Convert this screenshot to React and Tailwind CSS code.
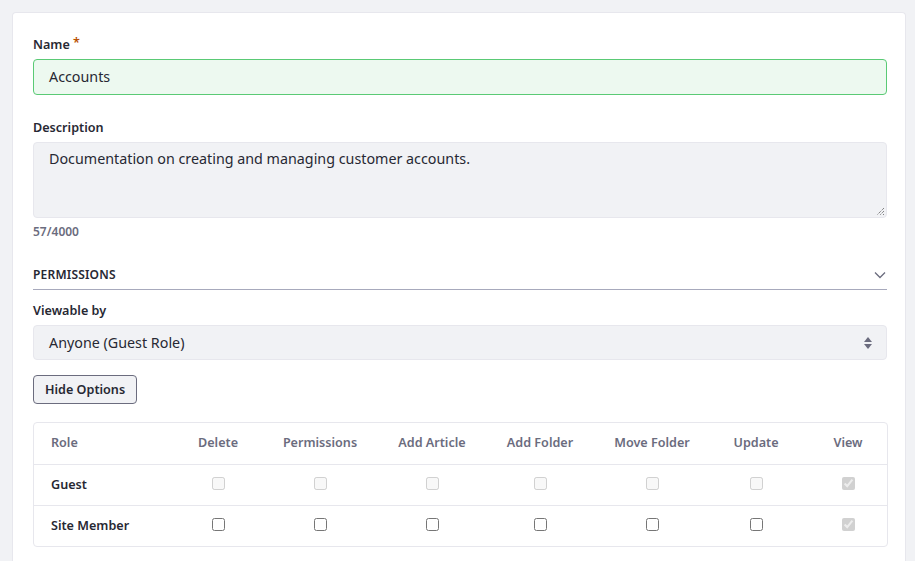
import React from 'react'

const COLS = [
  { label: 'Delete', w: 'w-[74px]' },
  { label: 'Permissions', w: 'w-[130px]' },
  { label: 'Add Article', w: 'w-[94px]' },
  { label: 'Add Folder', w: 'w-[122px]' },
  { label: 'Move Folder', w: 'w-[102px]' },
  { label: 'Update', w: 'w-[106px]' },
  { label: 'View', w: 'w-[78px]' },
]

const ROWS = [
  { role: 'Guest', disabled: true },
  { role: 'Site Member', disabled: false },
]

function Check({ disabled, checked }) {
  return (
    <input
      type="checkbox"
      className="relative -top-[3px] m-0 h-[13px] w-[13px] align-middle"
      disabled={disabled}
      defaultChecked={checked}
    />
  )
}

export default function App() {
  return (
    <div className="min-h-[561px] bg-[#f1f2f5] px-3 pt-3 font-['Noto_Sans',sans-serif] text-[#272833]">
      <div className="w-[894px] rounded-t-[4px] border border-b-0 border-[#e7e7ed] bg-white pl-5 pr-[18px] pt-[23px] pb-6">
        {/* Name */}
        <label className="block text-[12.6px] font-semibold leading-[18px]">
          Name <span className="relative -top-[2px] text-[#b95000]">*</span>
        </label>
        <div className="mt-[5px] flex h-9 items-center rounded-[4px] border border-[#5aca75] bg-[#edf9f0] px-[15px] pb-[1px] text-[14.3px]">
          Accounts
        </div>

        {/* Description */}
        <label className="mt-[24px] block text-[12.6px] font-semibold leading-[18px]">Description</label>
        <div className="relative mt-[5px] h-[76px] rounded-[4px] border border-[#e7e7ed] bg-[#f1f2f5] px-[15px] pt-[5px] text-[14.3px] leading-[22px]">
          Documentation on creating and managing customer accounts.
          <svg className="absolute right-[1px] bottom-[1px]" width="9" height="9" viewBox="0 0 9 9">
            <path d="M8 1L1 8M8 4L4 8M8 7L7 8" stroke="#555" strokeWidth="1" strokeDasharray="1 1" />
          </svg>
        </div>
        <div className="mt-[6px] text-[12px] font-semibold leading-[16px] text-[#6b6c7e]">57/4000</div>

        {/* Permissions section */}
        <div className="mt-[26px] flex items-center justify-between border-b border-[#a7a9bc] pb-[5px]">
          <span className="text-[12px] font-semibold leading-[18px] tracking-[0.2px]">PERMISSIONS</span>
          <svg width="12" height="8" viewBox="0 0 12 8" className="mr-[1px]">
            <path d="M1 1.5l5 5 5-5" fill="none" stroke="#6b6c7e" strokeWidth="1.3" />
          </svg>
        </div>

        <label className="mt-[12px] block text-[12.6px] font-semibold leading-[18px]">Viewable by</label>
        <div className="mt-[5px] flex h-[35px] items-center justify-between rounded-[4px] border border-[#e7e7ed] bg-[#f1f2f5] pl-[15px] pr-[13px] text-[14.3px]">
          <span>Anyone (Guest Role)</span>
          <svg width="10" height="14" viewBox="0 0 10 14">
            <path d="M5 1L9 6H1z" fill="#6b6c7e" />
            <path d="M5 13L9 8H1z" fill="#6b6c7e" />
          </svg>
        </div>

        <button className="mt-[15px] h-[29px] rounded-[4px] border border-[#6b6c7e] bg-[#f1f2f5] px-[11px] pt-[1px] text-[12.6px] font-semibold text-[#272833]">
          Hide Options
        </button>

        <div className="mt-[18px] w-[855px] rounded-[4px] border border-[#e7e7ed]">
          <table className="w-full border-collapse">
            <thead>
              <tr className="h-[41px] border-b border-[#e7e7ed]">
                <th className="pl-[17px] text-left text-[12.6px] font-semibold text-[#6b6c7e]">Role</th>
                {COLS.map(c => (
                  <th key={c.label} className={`${c.w} text-center text-[12.6px] font-semibold text-[#6b6c7e]`}>{c.label}</th>
                ))}
              </tr>
            </thead>
            <tbody>
              {ROWS.map((r, i) => (
                <tr key={r.role} className={`h-[41px] ${i === 0 ? 'border-b border-[#e7e7ed]' : ''}`}>
                  <td className="pl-[17px] pt-[1px] text-[12.6px] font-semibold">{r.role}</td>
                  {COLS.map(c => (
                    <td key={c.label} className="text-center leading-none">
                      {c.label === 'View'
                        ? <Check disabled checked />
                        : <Check disabled={r.disabled} />}
                    </td>
                  ))}
                </tr>
              ))}
            </tbody>
          </table>
        </div>
      </div>
    </div>
  )
}
